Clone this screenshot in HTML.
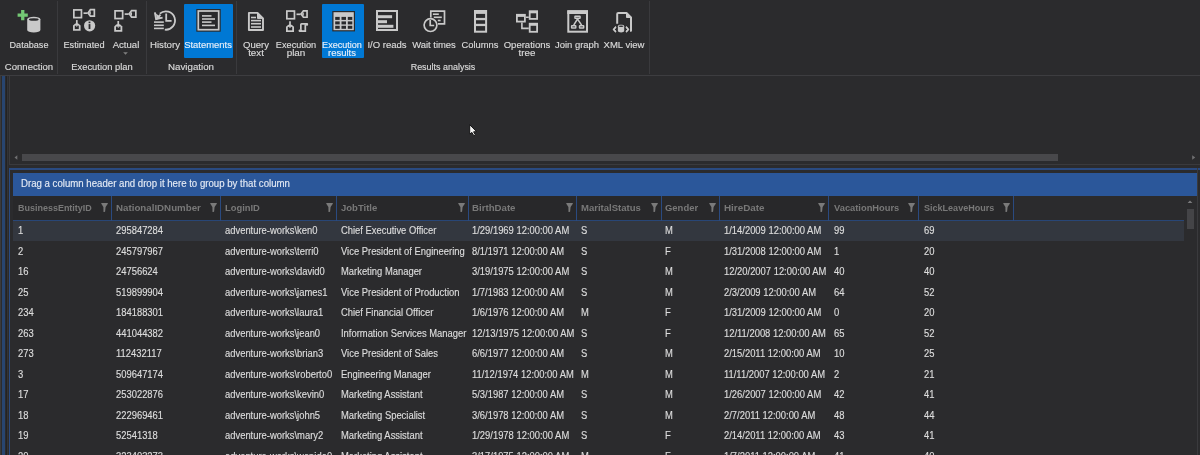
<!DOCTYPE html>
<html><head><meta charset="utf-8"><title>UI</title><style>
html,body{margin:0;padding:0;width:1200px;height:455px;overflow:hidden;background:#2b2b2d;font-family:"Liberation Sans",sans-serif;}
#root{position:absolute;left:0;top:0;width:1200px;height:455px;overflow:hidden;will-change:transform;}
.t{position:absolute;white-space:pre;line-height:12px;transform-origin:0 0;}

.c{text-align:center;transform-origin:50% 0;}
</style></head>
<body><div id="root">
<div style="position:absolute;left:0;top:0;width:1200px;height:75px;background:#2b2b2d"></div>
<div style="position:absolute;left:0;top:75px;width:1200px;height:1px;background:#3d3d40"></div>
<div style="position:absolute;left:57px;top:1px;width:1px;height:73px;background:#3a3a3d"></div>
<div style="position:absolute;left:146px;top:1px;width:1px;height:73px;background:#3a3a3d"></div>
<div style="position:absolute;left:236px;top:1px;width:1px;height:73px;background:#3a3a3d"></div>
<div style="position:absolute;left:649px;top:1px;width:1px;height:73px;background:#3a3a3d"></div>
<div style="position:absolute;left:184px;top:4px;width:49px;height:54px;background:#0078d4;border-radius:1px"></div>
<div style="position:absolute;left:322px;top:4px;width:42px;height:54px;background:#0078d4;border-radius:1px"></div>
<div class="t c" style="left:-71.00px;width:200px;top:38.51px;font-size:9.5px;color:#dadada;transform:scaleX(0.9564);-webkit-text-stroke:0.15px currentColor;">Database</div>
<div class="t c" style="left:-16.10px;width:200px;top:38.51px;font-size:9.5px;color:#dadada;transform:scaleX(0.9728);-webkit-text-stroke:0.15px currentColor;">Estimated</div>
<div class="t c" style="left:26.15px;width:200px;top:38.51px;font-size:9.5px;color:#dadada;transform:scaleX(1.0073);-webkit-text-stroke:0.15px currentColor;">Actual</div>
<div class="t c" style="left:64.95px;width:200px;top:38.51px;font-size:9.5px;color:#dadada;transform:scaleX(1.0216);-webkit-text-stroke:0.15px currentColor;">History</div>
<div class="t c" style="left:108.00px;width:200px;top:38.51px;font-size:9.5px;color:#e6eef8;transform:scaleX(0.9925);-webkit-text-stroke:0.15px currentColor;">Statements</div>
<div class="t c" style="left:156.00px;width:200px;top:38.51px;font-size:9.5px;color:#dadada;transform:scaleX(1.0010);-webkit-text-stroke:0.15px currentColor;">Query</div>
<div class="t c" style="left:156.00px;width:200px;top:47.21px;font-size:9.5px;color:#dadada;transform:scaleX(1.0253);-webkit-text-stroke:0.15px currentColor;">text</div>
<div class="t c" style="left:196.30px;width:200px;top:38.51px;font-size:9.5px;color:#dadada;transform:scaleX(0.9680);-webkit-text-stroke:0.15px currentColor;">Execution</div>
<div class="t c" style="left:196.30px;width:200px;top:47.21px;font-size:9.5px;color:#dadada;transform:scaleX(1.0407);-webkit-text-stroke:0.15px currentColor;">plan</div>
<div class="t c" style="left:242.35px;width:200px;top:38.51px;font-size:9.5px;color:#e6eef8;transform:scaleX(0.9537);-webkit-text-stroke:0.15px currentColor;">Execution</div>
<div class="t c" style="left:242.35px;width:200px;top:47.21px;font-size:9.5px;color:#e6eef8;transform:scaleX(0.9970);-webkit-text-stroke:0.15px currentColor;">results</div>
<div class="t c" style="left:286.90px;width:200px;top:38.51px;font-size:9.5px;color:#dadada;transform:scaleX(1.0006);-webkit-text-stroke:0.15px currentColor;">I/O reads</div>
<div class="t c" style="left:333.70px;width:200px;top:38.51px;font-size:9.5px;color:#dadada;transform:scaleX(0.9935);-webkit-text-stroke:0.15px currentColor;">Wait times</div>
<div class="t c" style="left:380.00px;width:200px;top:38.51px;font-size:9.5px;color:#dadada;transform:scaleX(0.9840);-webkit-text-stroke:0.15px currentColor;">Columns</div>
<div class="t c" style="left:426.80px;width:200px;top:38.51px;font-size:9.5px;color:#dadada;transform:scaleX(1.0025);-webkit-text-stroke:0.15px currentColor;">Operations</div>
<div class="t c" style="left:426.80px;width:200px;top:47.21px;font-size:9.5px;color:#dadada;transform:scaleX(1.0260);-webkit-text-stroke:0.15px currentColor;">tree</div>
<div class="t c" style="left:476.70px;width:200px;top:38.51px;font-size:9.5px;color:#dadada;transform:scaleX(0.9961);-webkit-text-stroke:0.15px currentColor;">Join graph</div>
<div class="t c" style="left:524.00px;width:200px;top:38.51px;font-size:9.5px;color:#dadada;transform:scaleX(1.0018);-webkit-text-stroke:0.15px currentColor;">XML view</div>
<div class="t c" style="left:-71.20px;width:200px;top:60.91px;font-size:9.5px;color:#dadada;transform:scaleX(1.0049);-webkit-text-stroke:0.15px currentColor;">Connection</div>
<div class="t c" style="left:1.80px;width:200px;top:60.91px;font-size:9.5px;color:#dadada;transform:scaleX(0.9835);-webkit-text-stroke:0.15px currentColor;">Execution plan</div>
<div class="t c" style="left:91.00px;width:200px;top:60.91px;font-size:9.5px;color:#dadada;transform:scaleX(1.0269);-webkit-text-stroke:0.15px currentColor;">Navigation</div>
<div class="t c" style="left:343.10px;width:200px;top:60.91px;font-size:9.5px;color:#dadada;transform:scaleX(0.9419);-webkit-text-stroke:0.15px currentColor;">Results analysis</div>
<svg style="position:absolute;left:122px;top:51px" width="8" height="5"><path d="M1.2 1.2 L5.8 1.2 L3.5 3.8Z" fill="#808080"/></svg>
<svg style="position:absolute;left:0;top:0" width="700" height="60"><path d="M21.1 10 h3.3 v3.5 h3.4 v3.3 h-3.4 v3.4 h-3.3 v-3.4 h-3.5 v-3.3 h3.5z" fill="#74c874"/><path d="M27.2 19.2 A6.6 2.4 0 0 1 40.4 19.2 L40.4 30 A6.6 2.4 0 0 1 27.2 30 Z" fill="#c9c9c9"/><ellipse cx="33.8" cy="19.5" rx="4.9" ry="1.35" fill="#2b2b2d"/><rect x="73.85" y="9.92" width="7.6000000000000005" height="7.7" fill="none" stroke="#c9c9c9" stroke-width="1.7"/><path d="M83.5 13.17 H87.5" stroke="#c9c9c9" stroke-width="1.7"/><path d="M88.05 12.895 L90.4 9.67 H94.35000000000001 V16.119999999999997 H90.4 Z" fill="none" stroke="#c9c9c9" stroke-width="1.7" stroke-linejoin="miter"/><path d="M88.7 12.895 L90.8 11.02 V14.77 Z" fill="#c9c9c9"/><path d="M76.8 20.07 V23.97" stroke="#c9c9c9" stroke-width="1.7"/><path d="M73 30.87 V25.57 L75.0 23.669999999999998 L76.8 22.97 L78.6 23.669999999999998 L80.6 25.57 V30.87 Z" fill="#c9c9c9"/><rect x="74.8" y="25.669999999999998" width="3.9999999999999996" height="3.400000000000002" fill="#2b2b2d"/><path d="M75.7 25.57 L77.89999999999999 25.57 L76.8 26.97 Z" fill="#c9c9c9"/><circle cx="89.6" cy="25.8" r="5.6" fill="#c9c9c9"/><rect x="88.6" y="24.1" width="1.8" height="4.9" fill="#2b2b2d"/><rect x="88.6" y="21.6" width="1.8" height="1.6" fill="#2b2b2d"/><rect x="115.05" y="10.85" width="7.6000000000000005" height="7.7" fill="none" stroke="#c9c9c9" stroke-width="1.7"/><path d="M124.7 14.1 H128.7" stroke="#c9c9c9" stroke-width="1.7"/><path d="M129.25 13.825 L131.6 10.6 H135.85000000000002 V17.049999999999997 H131.6 Z" fill="none" stroke="#c9c9c9" stroke-width="1.7" stroke-linejoin="miter"/><path d="M129.9 13.825 L132.0 11.95 V15.7 Z" fill="#c9c9c9"/><path d="M118.25 21 V24.9" stroke="#c9c9c9" stroke-width="1.7"/><path d="M114.2 31.8 V26.5 L116.2 24.599999999999998 L118.25 23.9 L120.3 24.599999999999998 L122.3 26.5 V31.8 Z" fill="#c9c9c9"/><rect x="116.0" y="26.599999999999998" width="4.5" height="3.400000000000002" fill="#2b2b2d"/><path d="M117.15 26.5 L119.35 26.5 L118.25 27.9 Z" fill="#c9c9c9"/><path d="M159.8 13.6 A 9.2 9.2 0 1 1 164.8 29.7" fill="none" stroke="#c9c9c9" stroke-width="1.8"/><path d="M154.9 12.4 L156.1 19.2 L162.6 17.6" fill="none" stroke="#c9c9c9" stroke-width="1.9" stroke-linejoin="miter"/><path d="M156 13.6 L156.6 18.6 L161.2 17.4 Z" fill="#c9c9c9"/><path d="M156.5 19 L160.5 14.6" fill="none" stroke="#c9c9c9" stroke-width="1.8"/><path d="M166.2 13.4 V20.8 H171.6" fill="none" stroke="#c9c9c9" stroke-width="1.8"/><rect x="154" y="21.3" width="9.8" height="1.6" fill="#c9c9c9"/><rect x="154" y="24.5" width="9.8" height="1.6" fill="#c9c9c9"/><rect x="154" y="27.599999999999998" width="9.8" height="1.6" fill="#c9c9c9"/><rect x="196.3" y="9" width="24.4" height="22.7" fill="#2a2a2c"/><rect x="198.3" y="11" width="20.4" height="18.7" fill="none" stroke="#c9c9c9" stroke-width="1.7"/><rect x="202" y="15.1" width="9.5" height="1.6" fill="#c9c9c9"/><rect x="202" y="18.2" width="13" height="1.6" fill="#c9c9c9"/><rect x="202" y="21.3" width="9.5" height="1.6" fill="#c9c9c9"/><rect x="202" y="24.599999999999998" width="13" height="1.6" fill="#c9c9c9"/><path d="M248.9 12.9 H257.5 L263 18.4 V30 H248.9 Z" fill="none" stroke="#c9c9c9" stroke-width="1.9" stroke-linejoin="round"/><path d="M257.5 12.9 V18.4 H263 Z" fill="#c9c9c9" stroke="#c9c9c9" stroke-width="1" stroke-linejoin="round"/><rect x="251" y="16.7" width="5" height="1.6" fill="#c9c9c9"/><rect x="251" y="19.8" width="10" height="1.6" fill="#c9c9c9"/><rect x="251" y="22.9" width="10" height="1.6" fill="#c9c9c9"/><rect x="251" y="26.2" width="10" height="1.6" fill="#c9c9c9"/><rect x="286.85" y="11.049999999999999" width="7.6000000000000005" height="7.7" fill="none" stroke="#c9c9c9" stroke-width="1.7"/><path d="M296.5 14.299999999999999 H300.5" stroke="#c9c9c9" stroke-width="1.7"/><path d="M301.05 14.025 L303.4 10.799999999999999 H307.04999999999995 V17.25 H303.4 Z" fill="none" stroke="#c9c9c9" stroke-width="1.7" stroke-linejoin="miter"/><path d="M301.7 14.025 L303.8 12.149999999999999 V15.900000000000002 Z" fill="#c9c9c9"/><path d="M290.0 21.3 V25.200000000000003" stroke="#c9c9c9" stroke-width="1.7"/><path d="M286 32.1 V26.800000000000004 L288.0 24.900000000000002 L290.0 24.200000000000003 L292.0 24.900000000000002 L294.0 26.800000000000004 V32.1 Z" fill="#c9c9c9"/><rect x="287.8" y="26.900000000000002" width="4.4" height="3.3999999999999986" fill="#2b2b2d"/><path d="M288.9 26.800000000000004 L291.1 26.800000000000004 L290.0 28.200000000000003 Z" fill="#c9c9c9"/><path d="M300.85 29.8 V24.6 Q300.85 23.85 301.6 23.85 H307" fill="none" stroke="#c9c9c9" stroke-width="1.7"/><path d="M305.3 24.2 V31.15 H299.6" fill="none" stroke="#c9c9c9" stroke-width="1.7"/><rect x="298.6" y="29.5" width="3.6" height="2.5" rx="1.1" fill="#c9c9c9"/><rect x="305.8" y="23" width="2.3" height="2.7" rx="1.0" fill="#c9c9c9"/><rect x="332.3" y="11" width="22.7" height="20.4" fill="#2a2a2c"/><rect x="333.5" y="12.2" width="20.3" height="18" fill="#c9c9c9"/><rect x="335.2" y="16.9" width="4.5" height="3" fill="#2a2a2c"/><rect x="341.5" y="16.9" width="4.5" height="3" fill="#2a2a2c"/><rect x="347.8" y="16.9" width="4.5" height="3" fill="#2a2a2c"/><rect x="335.2" y="21.4" width="4.5" height="3" fill="#2a2a2c"/><rect x="341.5" y="21.4" width="4.5" height="3" fill="#2a2a2c"/><rect x="347.8" y="21.4" width="4.5" height="3" fill="#2a2a2c"/><rect x="335.2" y="25.8" width="4.5" height="3" fill="#2a2a2c"/><rect x="341.5" y="25.8" width="4.5" height="3" fill="#2a2a2c"/><rect x="347.8" y="25.8" width="4.5" height="3" fill="#2a2a2c"/><rect x="377" y="11" width="20" height="19" fill="none" stroke="#c9c9c9" stroke-width="2"/><rect x="376" y="15.2" width="16.100000000000023" height="3" fill="#c9c9c9"/><rect x="376" y="20.2" width="11" height="3" fill="#c9c9c9"/><rect x="376" y="24.8" width="17.399999999999977" height="3" fill="#c9c9c9"/><path d="M430.8 18.5 V11.15 H444.5 V23.95 H437.5" fill="none" stroke="#c9c9c9" stroke-width="1.7"/><rect x="432.9" y="13.399999999999999" width="5.900000000000034" height="1.6" fill="#c9c9c9"/><rect x="433.8" y="16.5" width="8.0" height="1.6" fill="#c9c9c9"/><rect x="437.8" y="19.7" width="2.8000000000000114" height="1.6" fill="#c9c9c9"/><circle cx="430.5" cy="25.1" r="7.6" fill="#2b2b2d"/><circle cx="430.5" cy="25.1" r="6.4" fill="none" stroke="#c9c9c9" stroke-width="1.7"/><path d="M430.2 20 V25.5 H434.2" fill="none" stroke="#c9c9c9" stroke-width="1.7"/><rect x="474" y="10" width="13.1" height="22.7" fill="#c9c9c9"/><rect x="476" y="13.9" width="9.1" height="3.9999999999999982" fill="#2b2b2d"/><rect x="476" y="20.2" width="9.1" height="3.6000000000000014" fill="#2b2b2d"/><rect x="476" y="26.1" width="9.1" height="4.599999999999998" fill="#2b2b2d"/><rect x="516" y="13.9" width="9.799999999999955" height="8.6" fill="#c9c9c9"/><rect x="517.8" y="16.9" width="6.199999999999955" height="3.8" fill="#2b2b2d"/><rect x="528.8" y="10.3" width="9.200000000000045" height="9.5" fill="#c9c9c9"/><rect x="530.5999999999999" y="13.3" width="5.600000000000046" height="4.7" fill="#2b2b2d"/><rect x="528.8" y="22.8" width="9.200000000000045" height="9.900000000000002" fill="#c9c9c9"/><rect x="530.5999999999999" y="25.8" width="5.600000000000046" height="5.100000000000002" fill="#2b2b2d"/><path d="M525.8 17.2 H528.8 M521.9 22.5 V28.4 H528.8" fill="none" stroke="#c9c9c9" stroke-width="1.6"/><rect x="568.3" y="11.3" width="18.7" height="20.4" fill="none" stroke="#c9c9c9" stroke-width="2"/><rect x="567.3" y="10.3" width="20.7" height="3.7" fill="#c9c9c9"/><rect x="574.9" y="16.3" width="5.2" height="2" rx="0.3" fill="none" stroke="#c9c9c9" stroke-width="1.4"/><rect x="571.6" y="25.8" width="4.2" height="2.2" rx="0.3" fill="none" stroke="#c9c9c9" stroke-width="1.4"/><rect x="579.5" y="25.8" width="4.2" height="2.2" rx="0.3" fill="none" stroke="#c9c9c9" stroke-width="1.4"/><path d="M577.5 19 L573.7 25.1 M577.5 19 L581.6 25.1" fill="none" stroke="#c9c9c9" stroke-width="1.5"/><path d="M617.2 23.8 V14 Q617.2 12.9 618.3 12.9 H626.5 L631 17.5 V30.7 H630" fill="none" stroke="#c9c9c9" stroke-width="2" stroke-linejoin="round"/><path d="M626.5 12.9 V17.5 H631 Z" fill="#c9c9c9" stroke="#c9c9c9" stroke-width="1" stroke-linejoin="round"/><path d="M616 26.8 L613.7 29.4 L616 32 M626 26.8 L628.3 29.4 L626 32" fill="none" stroke="#c9c9c9" stroke-width="1.5"/><circle cx="621" cy="29.5" r="5.3" fill="#2b2b2d"/><path d="M617.9 26.2 C617.9 24.3 624.2 24.3 624.2 26.2 V31 C624.2 32.9 617.9 32.9 617.9 31 Z" fill="#c9c9c9"/><ellipse cx="621.05" cy="26.3" rx="2.4" ry="0.7" fill="#2b2b2d"/><path d="M616 26.8 L613.7 29.4 L616 32 M626 26.8 L628.3 29.4 L626 32" fill="none" stroke="#c9c9c9" stroke-width="1.5"/></svg>
<div style="position:absolute;left:0px;top:76px;width:1px;height:379px;background:#3a3a3c"></div>
<div style="position:absolute;left:2px;top:76px;width:3px;height:379px;background:#284570"></div>
<div style="position:absolute;left:7px;top:76px;width:1px;height:379px;background:#333335"></div>
<div style="position:absolute;left:6px;top:76px;width:1px;height:379px;background:#222224"></div>
<div style="position:absolute;left:9px;top:76px;width:1px;height:89px;background:#3a3a3d"></div>
<div style="position:absolute;left:9px;top:164px;width:1191px;height:1px;background:#3a3a3d"></div>
<div style="position:absolute;left:22px;top:154px;width:1036px;height:7px;background:#48484b"></div>
<svg style="position:absolute;left:12px;top:153px" width="8" height="9"><path d="M5.3 2.3 V6.7 L2.5 4.5Z" fill="#707072"/></svg>
<svg style="position:absolute;left:1190px;top:153px" width="8" height="9"><path d="M2.2 2.2 V6.8 L5.2 4.5Z" fill="#707072"/></svg>
<svg style="position:absolute;left:468.6px;top:123.6px" width="11" height="15"><path d="M0.7 0.7 L0.7 10.2 L2.9 8.4 L4.9 11.9 L6.5 11.1 L4.6 7.8 L7.6 7.7 Z" fill="#f4f4f4" stroke="#141414" stroke-width="1" stroke-linejoin="round"/></svg>
<div style="position:absolute;left:9px;top:168px;width:1191px;height:2px;background:#2a4a80"></div>
<div style="position:absolute;left:9px;top:168px;width:1px;height:287px;background:#2a4a80"></div>
<div style="position:absolute;left:1197px;top:168px;width:1px;height:287px;background:#3a3a3d"></div>
<div style="position:absolute;left:13px;top:173px;width:1184px;height:23px;background:#2b579a"></div>
<div class="t" style="left:20.60px;top:177.94px;font-size:10.0px;color:#e4eaf4;transform:scaleX(0.9636);-webkit-text-stroke:0.15px currentColor;">Drag a column header and drop it here to group by that column</div>
<div style="position:absolute;left:13px;top:196px;width:1000px;height:24px;background:#28282a"></div>
<div style="position:absolute;left:13px;top:220px;width:1171px;height:1px;background:#284677"></div>
<div style="position:absolute;left:111px;top:196px;width:1px;height:25px;background:#2a4a80"></div>
<div style="position:absolute;left:220px;top:196px;width:1px;height:25px;background:#2a4a80"></div>
<div style="position:absolute;left:336px;top:196px;width:1px;height:25px;background:#2a4a80"></div>
<div style="position:absolute;left:468px;top:196px;width:1px;height:25px;background:#2a4a80"></div>
<div style="position:absolute;left:576px;top:196px;width:1px;height:25px;background:#2a4a80"></div>
<div style="position:absolute;left:661px;top:196px;width:1px;height:25px;background:#2a4a80"></div>
<div style="position:absolute;left:719px;top:196px;width:1px;height:25px;background:#2a4a80"></div>
<div style="position:absolute;left:828px;top:196px;width:1px;height:25px;background:#2a4a80"></div>
<div style="position:absolute;left:918px;top:196px;width:1px;height:25px;background:#2a4a80"></div>
<div style="position:absolute;left:1013px;top:196px;width:1px;height:25px;background:#2a4a80"></div>
<div class="t" style="left:18.00px;top:201.60px;font-size:9.8px;color:#787878;font-weight:bold;transform:scaleX(0.9159);">BusinessEntityID</div>
<svg style="position:absolute;left:100.8px;top:202.4px" width="8" height="11"><path d="M0.3 0.9 H6.8 V1.8 L4.6 5.0 L4.1 9.6 Q3.6 10.1 2.5 10.1 L2.4 5.0 L0.3 1.8 Z" fill="#7a7a7a"/></svg>
<div class="t" style="left:115.60px;top:201.60px;font-size:9.8px;color:#787878;font-weight:bold;transform:scaleX(0.9933);">NationalIDNumber</div>
<svg style="position:absolute;left:209.8px;top:202.4px" width="8" height="11"><path d="M0.3 0.9 H6.8 V1.8 L4.6 5.0 L4.1 9.6 Q3.6 10.1 2.5 10.1 L2.4 5.0 L0.3 1.8 Z" fill="#7a7a7a"/></svg>
<div class="t" style="left:225.00px;top:201.60px;font-size:9.8px;color:#787878;font-weight:bold;transform:scaleX(0.9570);">LoginID</div>
<svg style="position:absolute;left:325.8px;top:202.4px" width="8" height="11"><path d="M0.3 0.9 H6.8 V1.8 L4.6 5.0 L4.1 9.6 Q3.6 10.1 2.5 10.1 L2.4 5.0 L0.3 1.8 Z" fill="#7a7a7a"/></svg>
<div class="t" style="left:341.00px;top:201.60px;font-size:9.8px;color:#787878;font-weight:bold;transform:scaleX(0.9708);">JobTitle</div>
<svg style="position:absolute;left:457.8px;top:202.4px" width="8" height="11"><path d="M0.3 0.9 H6.8 V1.8 L4.6 5.0 L4.1 9.6 Q3.6 10.1 2.5 10.1 L2.4 5.0 L0.3 1.8 Z" fill="#7a7a7a"/></svg>
<div class="t" style="left:472.40px;top:201.60px;font-size:9.8px;color:#787878;font-weight:bold;transform:scaleX(0.9865);">BirthDate</div>
<svg style="position:absolute;left:565.8px;top:202.4px" width="8" height="11"><path d="M0.3 0.9 H6.8 V1.8 L4.6 5.0 L4.1 9.6 Q3.6 10.1 2.5 10.1 L2.4 5.0 L0.3 1.8 Z" fill="#7a7a7a"/></svg>
<div class="t" style="left:581.40px;top:201.60px;font-size:9.8px;color:#787878;font-weight:bold;transform:scaleX(0.9735);">MaritalStatus</div>
<svg style="position:absolute;left:650.8px;top:202.4px" width="8" height="11"><path d="M0.3 0.9 H6.8 V1.8 L4.6 5.0 L4.1 9.6 Q3.6 10.1 2.5 10.1 L2.4 5.0 L0.3 1.8 Z" fill="#7a7a7a"/></svg>
<div class="t" style="left:665.40px;top:201.60px;font-size:9.8px;color:#787878;font-weight:bold;transform:scaleX(0.9647);">Gender</div>
<svg style="position:absolute;left:708.8px;top:202.4px" width="8" height="11"><path d="M0.3 0.9 H6.8 V1.8 L4.6 5.0 L4.1 9.6 Q3.6 10.1 2.5 10.1 L2.4 5.0 L0.3 1.8 Z" fill="#7a7a7a"/></svg>
<div class="t" style="left:724.40px;top:201.60px;font-size:9.8px;color:#787878;font-weight:bold;transform:scaleX(1.0050);">HireDate</div>
<svg style="position:absolute;left:817.8px;top:202.4px" width="8" height="11"><path d="M0.3 0.9 H6.8 V1.8 L4.6 5.0 L4.1 9.6 Q3.6 10.1 2.5 10.1 L2.4 5.0 L0.3 1.8 Z" fill="#7a7a7a"/></svg>
<div class="t" style="left:833.60px;top:201.60px;font-size:9.8px;color:#787878;font-weight:bold;transform:scaleX(0.9518);">VacationHours</div>
<svg style="position:absolute;left:907.8px;top:202.4px" width="8" height="11"><path d="M0.3 0.9 H6.8 V1.8 L4.6 5.0 L4.1 9.6 Q3.6 10.1 2.5 10.1 L2.4 5.0 L0.3 1.8 Z" fill="#7a7a7a"/></svg>
<div class="t" style="left:923.60px;top:201.60px;font-size:9.8px;color:#787878;font-weight:bold;transform:scaleX(0.9220);">SickLeaveHours</div>
<svg style="position:absolute;left:1002.8px;top:202.4px" width="8" height="11"><path d="M0.3 0.9 H6.8 V1.8 L4.6 5.0 L4.1 9.6 Q3.6 10.1 2.5 10.1 L2.4 5.0 L0.3 1.8 Z" fill="#7a7a7a"/></svg>
<div style="position:absolute;left:13px;top:221px;width:1171px;height:20px;background:#33373f"></div>
<div class="t" style="left:18.00px;top:225.13px;font-size:10.0px;color:#dcdcdc;-webkit-text-stroke:0.15px currentColor;transform:scaleX(0.94);">1</div>
<div class="t" style="left:115.60px;top:225.13px;font-size:10.0px;color:#dcdcdc;-webkit-text-stroke:0.15px currentColor;transform:scaleX(0.94);">295847284</div>
<div class="t" style="left:225.00px;top:225.13px;font-size:10.0px;color:#dcdcdc;-webkit-text-stroke:0.15px currentColor;transform:scaleX(0.94);">adventure-works\ken0</div>
<div class="t" style="left:341.00px;top:225.13px;font-size:10.0px;color:#dcdcdc;-webkit-text-stroke:0.15px currentColor;transform:scaleX(0.94);">Chief Executive Officer</div>
<div class="t" style="left:472.40px;top:225.13px;font-size:10.0px;color:#dcdcdc;-webkit-text-stroke:0.15px currentColor;transform:scaleX(0.94);">1/29/1969 12:00:00 AM</div>
<div class="t" style="left:581.40px;top:225.13px;font-size:10.0px;color:#dcdcdc;-webkit-text-stroke:0.15px currentColor;transform:scaleX(0.94);">S</div>
<div class="t" style="left:665.40px;top:225.13px;font-size:10.0px;color:#dcdcdc;-webkit-text-stroke:0.15px currentColor;transform:scaleX(0.94);">M</div>
<div class="t" style="left:724.40px;top:225.13px;font-size:10.0px;color:#dcdcdc;-webkit-text-stroke:0.15px currentColor;transform:scaleX(0.94);">1/14/2009 12:00:00 AM</div>
<div class="t" style="left:833.60px;top:225.13px;font-size:10.0px;color:#dcdcdc;-webkit-text-stroke:0.15px currentColor;transform:scaleX(0.94);">99</div>
<div class="t" style="left:923.60px;top:225.13px;font-size:10.0px;color:#dcdcdc;-webkit-text-stroke:0.15px currentColor;transform:scaleX(0.94);">69</div>
<div class="t" style="left:18.00px;top:245.63px;font-size:10.0px;color:#dcdcdc;-webkit-text-stroke:0.15px currentColor;transform:scaleX(0.94);">2</div>
<div class="t" style="left:115.60px;top:245.63px;font-size:10.0px;color:#dcdcdc;-webkit-text-stroke:0.15px currentColor;transform:scaleX(0.94);">245797967</div>
<div class="t" style="left:225.00px;top:245.63px;font-size:10.0px;color:#dcdcdc;-webkit-text-stroke:0.15px currentColor;transform:scaleX(0.94);">adventure-works\terri0</div>
<div class="t" style="left:341.00px;top:245.63px;font-size:10.0px;color:#dcdcdc;-webkit-text-stroke:0.15px currentColor;transform:scaleX(0.94);">Vice President of Engineering</div>
<div class="t" style="left:472.40px;top:245.63px;font-size:10.0px;color:#dcdcdc;-webkit-text-stroke:0.15px currentColor;transform:scaleX(0.94);">8/1/1971 12:00:00 AM</div>
<div class="t" style="left:581.40px;top:245.63px;font-size:10.0px;color:#dcdcdc;-webkit-text-stroke:0.15px currentColor;transform:scaleX(0.94);">S</div>
<div class="t" style="left:665.40px;top:245.63px;font-size:10.0px;color:#dcdcdc;-webkit-text-stroke:0.15px currentColor;transform:scaleX(0.94);">F</div>
<div class="t" style="left:724.40px;top:245.63px;font-size:10.0px;color:#dcdcdc;-webkit-text-stroke:0.15px currentColor;transform:scaleX(0.94);">1/31/2008 12:00:00 AM</div>
<div class="t" style="left:833.60px;top:245.63px;font-size:10.0px;color:#dcdcdc;-webkit-text-stroke:0.15px currentColor;transform:scaleX(0.94);">1</div>
<div class="t" style="left:923.60px;top:245.63px;font-size:10.0px;color:#dcdcdc;-webkit-text-stroke:0.15px currentColor;transform:scaleX(0.94);">20</div>
<div class="t" style="left:18.00px;top:266.14px;font-size:10.0px;color:#dcdcdc;-webkit-text-stroke:0.15px currentColor;transform:scaleX(0.94);">16</div>
<div class="t" style="left:115.60px;top:266.14px;font-size:10.0px;color:#dcdcdc;-webkit-text-stroke:0.15px currentColor;transform:scaleX(0.94);">24756624</div>
<div class="t" style="left:225.00px;top:266.14px;font-size:10.0px;color:#dcdcdc;-webkit-text-stroke:0.15px currentColor;transform:scaleX(0.94);">adventure-works\david0</div>
<div class="t" style="left:341.00px;top:266.14px;font-size:10.0px;color:#dcdcdc;-webkit-text-stroke:0.15px currentColor;transform:scaleX(0.94);">Marketing Manager</div>
<div class="t" style="left:472.40px;top:266.14px;font-size:10.0px;color:#dcdcdc;-webkit-text-stroke:0.15px currentColor;transform:scaleX(0.94);">3/19/1975 12:00:00 AM</div>
<div class="t" style="left:581.40px;top:266.14px;font-size:10.0px;color:#dcdcdc;-webkit-text-stroke:0.15px currentColor;transform:scaleX(0.94);">S</div>
<div class="t" style="left:665.40px;top:266.14px;font-size:10.0px;color:#dcdcdc;-webkit-text-stroke:0.15px currentColor;transform:scaleX(0.94);">M</div>
<div class="t" style="left:724.40px;top:266.14px;font-size:10.0px;color:#dcdcdc;-webkit-text-stroke:0.15px currentColor;transform:scaleX(0.94);">12/20/2007 12:00:00 AM</div>
<div class="t" style="left:833.60px;top:266.14px;font-size:10.0px;color:#dcdcdc;-webkit-text-stroke:0.15px currentColor;transform:scaleX(0.94);">40</div>
<div class="t" style="left:923.60px;top:266.14px;font-size:10.0px;color:#dcdcdc;-webkit-text-stroke:0.15px currentColor;transform:scaleX(0.94);">40</div>
<div class="t" style="left:18.00px;top:286.64px;font-size:10.0px;color:#dcdcdc;-webkit-text-stroke:0.15px currentColor;transform:scaleX(0.94);">25</div>
<div class="t" style="left:115.60px;top:286.64px;font-size:10.0px;color:#dcdcdc;-webkit-text-stroke:0.15px currentColor;transform:scaleX(0.94);">519899904</div>
<div class="t" style="left:225.00px;top:286.64px;font-size:10.0px;color:#dcdcdc;-webkit-text-stroke:0.15px currentColor;transform:scaleX(0.94);">adventure-works\james1</div>
<div class="t" style="left:341.00px;top:286.64px;font-size:10.0px;color:#dcdcdc;-webkit-text-stroke:0.15px currentColor;transform:scaleX(0.94);">Vice President of Production</div>
<div class="t" style="left:472.40px;top:286.64px;font-size:10.0px;color:#dcdcdc;-webkit-text-stroke:0.15px currentColor;transform:scaleX(0.94);">1/7/1983 12:00:00 AM</div>
<div class="t" style="left:581.40px;top:286.64px;font-size:10.0px;color:#dcdcdc;-webkit-text-stroke:0.15px currentColor;transform:scaleX(0.94);">S</div>
<div class="t" style="left:665.40px;top:286.64px;font-size:10.0px;color:#dcdcdc;-webkit-text-stroke:0.15px currentColor;transform:scaleX(0.94);">M</div>
<div class="t" style="left:724.40px;top:286.64px;font-size:10.0px;color:#dcdcdc;-webkit-text-stroke:0.15px currentColor;transform:scaleX(0.94);">2/3/2009 12:00:00 AM</div>
<div class="t" style="left:833.60px;top:286.64px;font-size:10.0px;color:#dcdcdc;-webkit-text-stroke:0.15px currentColor;transform:scaleX(0.94);">64</div>
<div class="t" style="left:923.60px;top:286.64px;font-size:10.0px;color:#dcdcdc;-webkit-text-stroke:0.15px currentColor;transform:scaleX(0.94);">52</div>
<div class="t" style="left:18.00px;top:307.14px;font-size:10.0px;color:#dcdcdc;-webkit-text-stroke:0.15px currentColor;transform:scaleX(0.94);">234</div>
<div class="t" style="left:115.60px;top:307.14px;font-size:10.0px;color:#dcdcdc;-webkit-text-stroke:0.15px currentColor;transform:scaleX(0.94);">184188301</div>
<div class="t" style="left:225.00px;top:307.14px;font-size:10.0px;color:#dcdcdc;-webkit-text-stroke:0.15px currentColor;transform:scaleX(0.94);">adventure-works\laura1</div>
<div class="t" style="left:341.00px;top:307.14px;font-size:10.0px;color:#dcdcdc;-webkit-text-stroke:0.15px currentColor;transform:scaleX(0.94);">Chief Financial Officer</div>
<div class="t" style="left:472.40px;top:307.14px;font-size:10.0px;color:#dcdcdc;-webkit-text-stroke:0.15px currentColor;transform:scaleX(0.94);">1/6/1976 12:00:00 AM</div>
<div class="t" style="left:581.40px;top:307.14px;font-size:10.0px;color:#dcdcdc;-webkit-text-stroke:0.15px currentColor;transform:scaleX(0.94);">M</div>
<div class="t" style="left:665.40px;top:307.14px;font-size:10.0px;color:#dcdcdc;-webkit-text-stroke:0.15px currentColor;transform:scaleX(0.94);">F</div>
<div class="t" style="left:724.40px;top:307.14px;font-size:10.0px;color:#dcdcdc;-webkit-text-stroke:0.15px currentColor;transform:scaleX(0.94);">1/31/2009 12:00:00 AM</div>
<div class="t" style="left:833.60px;top:307.14px;font-size:10.0px;color:#dcdcdc;-webkit-text-stroke:0.15px currentColor;transform:scaleX(0.94);">0</div>
<div class="t" style="left:923.60px;top:307.14px;font-size:10.0px;color:#dcdcdc;-webkit-text-stroke:0.15px currentColor;transform:scaleX(0.94);">20</div>
<div class="t" style="left:18.00px;top:327.64px;font-size:10.0px;color:#dcdcdc;-webkit-text-stroke:0.15px currentColor;transform:scaleX(0.94);">263</div>
<div class="t" style="left:115.60px;top:327.64px;font-size:10.0px;color:#dcdcdc;-webkit-text-stroke:0.15px currentColor;transform:scaleX(0.94);">441044382</div>
<div class="t" style="left:225.00px;top:327.64px;font-size:10.0px;color:#dcdcdc;-webkit-text-stroke:0.15px currentColor;transform:scaleX(0.94);">adventure-works\jean0</div>
<div class="t" style="left:341.00px;top:327.64px;font-size:10.0px;color:#dcdcdc;-webkit-text-stroke:0.15px currentColor;transform:scaleX(0.94);">Information Services Manager</div>
<div class="t" style="left:472.40px;top:327.64px;font-size:10.0px;color:#dcdcdc;-webkit-text-stroke:0.15px currentColor;transform:scaleX(0.94);">12/13/1975 12:00:00 AM</div>
<div class="t" style="left:581.40px;top:327.64px;font-size:10.0px;color:#dcdcdc;-webkit-text-stroke:0.15px currentColor;transform:scaleX(0.94);">S</div>
<div class="t" style="left:665.40px;top:327.64px;font-size:10.0px;color:#dcdcdc;-webkit-text-stroke:0.15px currentColor;transform:scaleX(0.94);">F</div>
<div class="t" style="left:724.40px;top:327.64px;font-size:10.0px;color:#dcdcdc;-webkit-text-stroke:0.15px currentColor;transform:scaleX(0.94);">12/11/2008 12:00:00 AM</div>
<div class="t" style="left:833.60px;top:327.64px;font-size:10.0px;color:#dcdcdc;-webkit-text-stroke:0.15px currentColor;transform:scaleX(0.94);">65</div>
<div class="t" style="left:923.60px;top:327.64px;font-size:10.0px;color:#dcdcdc;-webkit-text-stroke:0.15px currentColor;transform:scaleX(0.94);">52</div>
<div class="t" style="left:18.00px;top:348.14px;font-size:10.0px;color:#dcdcdc;-webkit-text-stroke:0.15px currentColor;transform:scaleX(0.94);">273</div>
<div class="t" style="left:115.60px;top:348.14px;font-size:10.0px;color:#dcdcdc;-webkit-text-stroke:0.15px currentColor;transform:scaleX(0.94);">112432117</div>
<div class="t" style="left:225.00px;top:348.14px;font-size:10.0px;color:#dcdcdc;-webkit-text-stroke:0.15px currentColor;transform:scaleX(0.94);">adventure-works\brian3</div>
<div class="t" style="left:341.00px;top:348.14px;font-size:10.0px;color:#dcdcdc;-webkit-text-stroke:0.15px currentColor;transform:scaleX(0.94);">Vice President of Sales</div>
<div class="t" style="left:472.40px;top:348.14px;font-size:10.0px;color:#dcdcdc;-webkit-text-stroke:0.15px currentColor;transform:scaleX(0.94);">6/6/1977 12:00:00 AM</div>
<div class="t" style="left:581.40px;top:348.14px;font-size:10.0px;color:#dcdcdc;-webkit-text-stroke:0.15px currentColor;transform:scaleX(0.94);">S</div>
<div class="t" style="left:665.40px;top:348.14px;font-size:10.0px;color:#dcdcdc;-webkit-text-stroke:0.15px currentColor;transform:scaleX(0.94);">M</div>
<div class="t" style="left:724.40px;top:348.14px;font-size:10.0px;color:#dcdcdc;-webkit-text-stroke:0.15px currentColor;transform:scaleX(0.94);">2/15/2011 12:00:00 AM</div>
<div class="t" style="left:833.60px;top:348.14px;font-size:10.0px;color:#dcdcdc;-webkit-text-stroke:0.15px currentColor;transform:scaleX(0.94);">10</div>
<div class="t" style="left:923.60px;top:348.14px;font-size:10.0px;color:#dcdcdc;-webkit-text-stroke:0.15px currentColor;transform:scaleX(0.94);">25</div>
<div class="t" style="left:18.00px;top:368.64px;font-size:10.0px;color:#dcdcdc;-webkit-text-stroke:0.15px currentColor;transform:scaleX(0.94);">3</div>
<div class="t" style="left:115.60px;top:368.64px;font-size:10.0px;color:#dcdcdc;-webkit-text-stroke:0.15px currentColor;transform:scaleX(0.94);">509647174</div>
<div class="t" style="left:225.00px;top:368.64px;font-size:10.0px;color:#dcdcdc;-webkit-text-stroke:0.15px currentColor;transform:scaleX(0.94);">adventure-works\roberto0</div>
<div class="t" style="left:341.00px;top:368.64px;font-size:10.0px;color:#dcdcdc;-webkit-text-stroke:0.15px currentColor;transform:scaleX(0.94);">Engineering Manager</div>
<div class="t" style="left:472.40px;top:368.64px;font-size:10.0px;color:#dcdcdc;-webkit-text-stroke:0.15px currentColor;transform:scaleX(0.94);">11/12/1974 12:00:00 AM</div>
<div class="t" style="left:581.40px;top:368.64px;font-size:10.0px;color:#dcdcdc;-webkit-text-stroke:0.15px currentColor;transform:scaleX(0.94);">M</div>
<div class="t" style="left:665.40px;top:368.64px;font-size:10.0px;color:#dcdcdc;-webkit-text-stroke:0.15px currentColor;transform:scaleX(0.94);">M</div>
<div class="t" style="left:724.40px;top:368.64px;font-size:10.0px;color:#dcdcdc;-webkit-text-stroke:0.15px currentColor;transform:scaleX(0.94);">11/11/2007 12:00:00 AM</div>
<div class="t" style="left:833.60px;top:368.64px;font-size:10.0px;color:#dcdcdc;-webkit-text-stroke:0.15px currentColor;transform:scaleX(0.94);">2</div>
<div class="t" style="left:923.60px;top:368.64px;font-size:10.0px;color:#dcdcdc;-webkit-text-stroke:0.15px currentColor;transform:scaleX(0.94);">21</div>
<div class="t" style="left:18.00px;top:389.14px;font-size:10.0px;color:#dcdcdc;-webkit-text-stroke:0.15px currentColor;transform:scaleX(0.94);">17</div>
<div class="t" style="left:115.60px;top:389.14px;font-size:10.0px;color:#dcdcdc;-webkit-text-stroke:0.15px currentColor;transform:scaleX(0.94);">253022876</div>
<div class="t" style="left:225.00px;top:389.14px;font-size:10.0px;color:#dcdcdc;-webkit-text-stroke:0.15px currentColor;transform:scaleX(0.94);">adventure-works\kevin0</div>
<div class="t" style="left:341.00px;top:389.14px;font-size:10.0px;color:#dcdcdc;-webkit-text-stroke:0.15px currentColor;transform:scaleX(0.94);">Marketing Assistant</div>
<div class="t" style="left:472.40px;top:389.14px;font-size:10.0px;color:#dcdcdc;-webkit-text-stroke:0.15px currentColor;transform:scaleX(0.94);">5/3/1987 12:00:00 AM</div>
<div class="t" style="left:581.40px;top:389.14px;font-size:10.0px;color:#dcdcdc;-webkit-text-stroke:0.15px currentColor;transform:scaleX(0.94);">S</div>
<div class="t" style="left:665.40px;top:389.14px;font-size:10.0px;color:#dcdcdc;-webkit-text-stroke:0.15px currentColor;transform:scaleX(0.94);">M</div>
<div class="t" style="left:724.40px;top:389.14px;font-size:10.0px;color:#dcdcdc;-webkit-text-stroke:0.15px currentColor;transform:scaleX(0.94);">1/26/2007 12:00:00 AM</div>
<div class="t" style="left:833.60px;top:389.14px;font-size:10.0px;color:#dcdcdc;-webkit-text-stroke:0.15px currentColor;transform:scaleX(0.94);">42</div>
<div class="t" style="left:923.60px;top:389.14px;font-size:10.0px;color:#dcdcdc;-webkit-text-stroke:0.15px currentColor;transform:scaleX(0.94);">41</div>
<div class="t" style="left:18.00px;top:409.64px;font-size:10.0px;color:#dcdcdc;-webkit-text-stroke:0.15px currentColor;transform:scaleX(0.94);">18</div>
<div class="t" style="left:115.60px;top:409.64px;font-size:10.0px;color:#dcdcdc;-webkit-text-stroke:0.15px currentColor;transform:scaleX(0.94);">222969461</div>
<div class="t" style="left:225.00px;top:409.64px;font-size:10.0px;color:#dcdcdc;-webkit-text-stroke:0.15px currentColor;transform:scaleX(0.94);">adventure-works\john5</div>
<div class="t" style="left:341.00px;top:409.64px;font-size:10.0px;color:#dcdcdc;-webkit-text-stroke:0.15px currentColor;transform:scaleX(0.94);">Marketing Specialist</div>
<div class="t" style="left:472.40px;top:409.64px;font-size:10.0px;color:#dcdcdc;-webkit-text-stroke:0.15px currentColor;transform:scaleX(0.94);">3/6/1978 12:00:00 AM</div>
<div class="t" style="left:581.40px;top:409.64px;font-size:10.0px;color:#dcdcdc;-webkit-text-stroke:0.15px currentColor;transform:scaleX(0.94);">S</div>
<div class="t" style="left:665.40px;top:409.64px;font-size:10.0px;color:#dcdcdc;-webkit-text-stroke:0.15px currentColor;transform:scaleX(0.94);">M</div>
<div class="t" style="left:724.40px;top:409.64px;font-size:10.0px;color:#dcdcdc;-webkit-text-stroke:0.15px currentColor;transform:scaleX(0.94);">2/7/2011 12:00:00 AM</div>
<div class="t" style="left:833.60px;top:409.64px;font-size:10.0px;color:#dcdcdc;-webkit-text-stroke:0.15px currentColor;transform:scaleX(0.94);">48</div>
<div class="t" style="left:923.60px;top:409.64px;font-size:10.0px;color:#dcdcdc;-webkit-text-stroke:0.15px currentColor;transform:scaleX(0.94);">44</div>
<div class="t" style="left:18.00px;top:430.14px;font-size:10.0px;color:#dcdcdc;-webkit-text-stroke:0.15px currentColor;transform:scaleX(0.94);">19</div>
<div class="t" style="left:115.60px;top:430.14px;font-size:10.0px;color:#dcdcdc;-webkit-text-stroke:0.15px currentColor;transform:scaleX(0.94);">52541318</div>
<div class="t" style="left:225.00px;top:430.14px;font-size:10.0px;color:#dcdcdc;-webkit-text-stroke:0.15px currentColor;transform:scaleX(0.94);">adventure-works\mary2</div>
<div class="t" style="left:341.00px;top:430.14px;font-size:10.0px;color:#dcdcdc;-webkit-text-stroke:0.15px currentColor;transform:scaleX(0.94);">Marketing Assistant</div>
<div class="t" style="left:472.40px;top:430.14px;font-size:10.0px;color:#dcdcdc;-webkit-text-stroke:0.15px currentColor;transform:scaleX(0.94);">1/29/1978 12:00:00 AM</div>
<div class="t" style="left:581.40px;top:430.14px;font-size:10.0px;color:#dcdcdc;-webkit-text-stroke:0.15px currentColor;transform:scaleX(0.94);">S</div>
<div class="t" style="left:665.40px;top:430.14px;font-size:10.0px;color:#dcdcdc;-webkit-text-stroke:0.15px currentColor;transform:scaleX(0.94);">F</div>
<div class="t" style="left:724.40px;top:430.14px;font-size:10.0px;color:#dcdcdc;-webkit-text-stroke:0.15px currentColor;transform:scaleX(0.94);">2/14/2011 12:00:00 AM</div>
<div class="t" style="left:833.60px;top:430.14px;font-size:10.0px;color:#dcdcdc;-webkit-text-stroke:0.15px currentColor;transform:scaleX(0.94);">43</div>
<div class="t" style="left:923.60px;top:430.14px;font-size:10.0px;color:#dcdcdc;-webkit-text-stroke:0.15px currentColor;transform:scaleX(0.94);">41</div>
<div class="t" style="left:18.00px;top:450.64px;font-size:10.0px;color:#dcdcdc;-webkit-text-stroke:0.15px currentColor;transform:scaleX(0.94);">20</div>
<div class="t" style="left:115.60px;top:450.64px;font-size:10.0px;color:#dcdcdc;-webkit-text-stroke:0.15px currentColor;transform:scaleX(0.94);">323403273</div>
<div class="t" style="left:225.00px;top:450.64px;font-size:10.0px;color:#dcdcdc;-webkit-text-stroke:0.15px currentColor;transform:scaleX(0.94);">adventure-works\wanida0</div>
<div class="t" style="left:341.00px;top:450.64px;font-size:10.0px;color:#dcdcdc;-webkit-text-stroke:0.15px currentColor;transform:scaleX(0.94);">Marketing Assistant</div>
<div class="t" style="left:472.40px;top:450.64px;font-size:10.0px;color:#dcdcdc;-webkit-text-stroke:0.15px currentColor;transform:scaleX(0.94);">3/17/1975 12:00:00 AM</div>
<div class="t" style="left:581.40px;top:450.64px;font-size:10.0px;color:#dcdcdc;-webkit-text-stroke:0.15px currentColor;transform:scaleX(0.94);">M</div>
<div class="t" style="left:665.40px;top:450.64px;font-size:10.0px;color:#dcdcdc;-webkit-text-stroke:0.15px currentColor;transform:scaleX(0.94);">F</div>
<div class="t" style="left:724.40px;top:450.64px;font-size:10.0px;color:#dcdcdc;-webkit-text-stroke:0.15px currentColor;transform:scaleX(0.94);">1/7/2011 12:00:00 AM</div>
<div class="t" style="left:833.60px;top:450.64px;font-size:10.0px;color:#dcdcdc;-webkit-text-stroke:0.15px currentColor;transform:scaleX(0.94);">41</div>
<div class="t" style="left:923.60px;top:450.64px;font-size:10.0px;color:#dcdcdc;-webkit-text-stroke:0.15px currentColor;transform:scaleX(0.94);">40</div>
<svg style="position:absolute;left:1186px;top:199px" width="8" height="6"><path d="M1.6 3.9 H6.4 L4 1.6Z" fill="#7a7a7c"/></svg>
<div style="position:absolute;left:1187px;top:209px;width:7px;height:20px;background:#444447"></div>
</div></body></html>
